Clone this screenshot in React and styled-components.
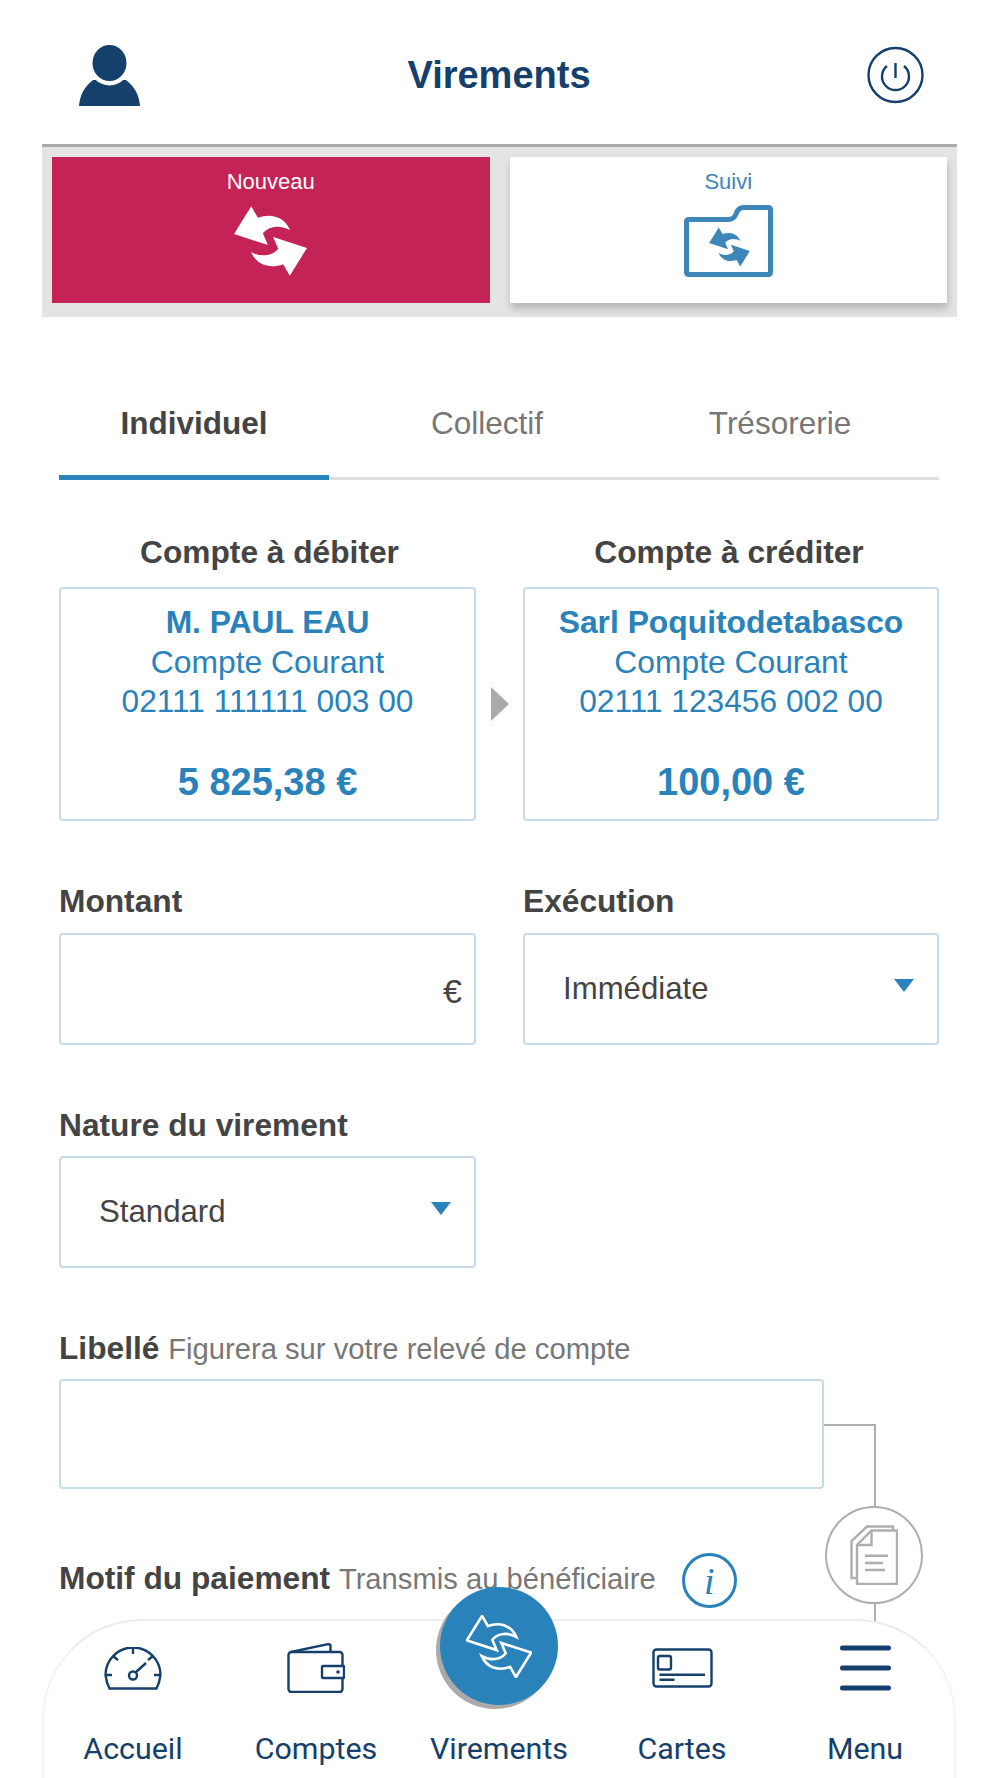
import styled, { createGlobalStyle } from 'styled-components'

const NAVY = '#14406b'
const BLUE = '#2a82ba'
const DARK = '#444444'
const GREY = '#777777'
const FIELD_BORDER = '#c6dce9'
const LINE = '#aeaeae'

function SwapArrowPaths(props) {
  const arrow = 'M155 108 L175 143 C215 128 255 140 272 180 C245 165 210 165 190 190 L205 225 L103 192 Z'
  return (
    <g {...props}>
      <path d={arrow} />
      <path d={arrow} transform="rotate(180 213 213)" />
    </g>
  )
}

function UserIcon() {
  return (
    <UserSvg width="61" height="61" viewBox="0 0 61 61">
      <path d="M0 61 C1 50 5 42 14 35 L47 35 C56 42 60 50 61 61 Z" fill={NAVY} />
      <ellipse cx="30.5" cy="19" rx="20.5" ry="21.5" fill="#fff" />
      <ellipse cx="30.5" cy="18" rx="17" ry="18" fill={NAVY} />
    </UserSvg>
  )
}

function PowerIcon() {
  return (
    <svg width="57" height="58" viewBox="0 0 57 58" fill="none" stroke={NAVY} strokeWidth="2.4">
      <circle cx="28.5" cy="29" r="27" />
      <path d="M20 20 A13.5 13.5 0 1 0 37 20" />
      <path d="M28.5 17 V32" />
    </svg>
  )
}

function FolderIcon() {
  return (
    <svg width="89" height="72" viewBox="0 0 89 72">
      <path
        d="M5 14.5 H44 Q50 14.5 52 9 Q54 2.5 60 2.5 H84 Q86.5 2.5 86.5 5 V67 Q86.5 69.5 84 69.5 H5 Q2.5 69.5 2.5 67 V17 Q2.5 14.5 5 14.5 Z"
        fill="none"
        stroke="#3d86b8"
        strokeWidth="5"
      />
      <svg x="24" y="22" width="43" height="40" viewBox="100 105 226 216">
        <SwapArrowPaths fill="#3d86b8" />
      </svg>
    </svg>
  )
}

function GaugeIcon() {
  return (
    <svg width="58" height="43" viewBox="0 0 58 43" fill="none" stroke={NAVY} strokeWidth="2.4">
      <path d="M5.5 41.5 H52.5 Q55.5 36 56.5 28 A27.5 27.5 0 0 0 1.5 28 Q2.5 36 5.5 41.5 Z" />
      <path d="M29 1 V7 M9 9 L14 13 M49 9 L44 13 M1 28 H8 M50 28 H57 M32 25 L42 16" />
      <circle cx="29" cy="28.5" r="4" />
    </svg>
  )
}

function WalletIcon() {
  return (
    <svg width="58" height="50" viewBox="0 0 58 50" fill="none" stroke={NAVY} strokeWidth="2.4" strokeLinejoin="round">
      <path d="M4 9 L41 1.2 Q43.5 1 43.5 3 V9" />
      <rect x="1.5" y="9" width="54" height="40" rx="3" />
      <rect x="35" y="23" width="22" height="12" rx="1" fill="#fff" />
      <circle cx="51" cy="29" r="1.8" fill={NAVY} stroke="none" />
    </svg>
  )
}

function CardIcon() {
  return (
    <svg width="61" height="40" viewBox="0 0 61 40" fill="none" stroke={NAVY} strokeWidth="2.4">
      <rect x="1.5" y="1.5" width="58" height="37" rx="3" />
      <rect x="6" y="8" width="13" height="13.5" rx="2" />
      <path d="M7.5 26.7 H53 M7.5 31.7 H22.5" />
    </svg>
  )
}

function MenuIcon() {
  return (
    <svg width="51" height="48" viewBox="0 0 51 48" stroke={NAVY} strokeWidth="5" strokeLinecap="round">
      <path d="M2.5 4 H48.5 M2.5 24 H48.5 M2.5 44 H48.5" />
    </svg>
  )
}

function DocsIcon() {
  return (
    <svg width="48" height="60" viewBox="0 0 48 60" fill="none" stroke={LINE} strokeWidth="2.4">
      <path d="M7 53 H1.5 V16 L17 1.5 H43 V5.5" />
      <path d="M21.5 5.5 H47 V59 H7 V20 Z" />
      <path d="M21.5 5.5 V20 H7" />
      <path d="M15 30.7 H38 M15 38 H33 M15 45 H35" />
    </svg>
  )
}

function App() {
  const tabs = ['Individuel', 'Collectif', 'Trésorerie']
  const navItems = [
    { label: 'Accueil', icon: <GaugeIcon /> },
    { label: 'Comptes', icon: <WalletIcon /> },
    { label: 'Virements', icon: null },
    { label: 'Cartes', icon: <CardIcon /> },
    { label: 'Menu', icon: <MenuIcon /> },
  ]

  return (
    <Page>
      <GlobalStyle />
      <Header>
        <UserIcon />
        <Title>Virements</Title>
        <PowerSlot>
          <PowerIcon />
        </PowerSlot>
      </Header>

      <ModeBand>
        <ModeCard $active>
          Nouveau
          <svg width="75" height="72" viewBox="100 105 226 216">
            <SwapArrowPaths fill="#fff" />
          </svg>
        </ModeCard>
        <ModeCard>
          Suivi
          <FolderIcon />
        </ModeCard>
      </ModeBand>

      <Content>
        <TabRow>
          {tabs.map((tab, i) => (
            <Tab key={tab} $active={i === 0}>
              {tab}
            </Tab>
          ))}
        </TabRow>

        <Accounts>
          <AccountTitle $side="left">Compte à débiter</AccountTitle>
          <span />
          <AccountTitle $side="right">Compte à créditer</AccountTitle>
          <AccountBox>
            <AccountName>M. PAUL EAU</AccountName>
            <AccountLine>Compte Courant</AccountLine>
            <AccountNumber>02111 111111 003 00</AccountNumber>
            <AccountAmount>5 825,38 €</AccountAmount>
          </AccountBox>
          <ArrowCell>
            <RightTriangle />
          </ArrowCell>
          <AccountBox>
            <AccountName>Sarl Poquitodetabasco</AccountName>
            <AccountLine>Compte Courant</AccountLine>
            <AccountNumber>02111 123456 002 00</AccountNumber>
            <AccountAmount>100,00 €</AccountAmount>
          </AccountBox>
        </Accounts>

        <FormRow>
          <div>
            <FieldLabel>Montant</FieldLabel>
            <Field>
              <Currency>€</Currency>
            </Field>
          </div>
          <div>
            <FieldLabel>Exécution</FieldLabel>
            <Field>
              <SelectValue>Immédiate</SelectValue>
              <DownTriangle />
            </Field>
          </div>
        </FormRow>

        <FormRow>
          <div>
            <FieldLabel $gap="11px">Nature du virement</FieldLabel>
            <Field>
              <SelectValue>Standard</SelectValue>
              <DownTriangle />
            </Field>
          </div>
        </FormRow>

        <LabelGroup>
          <FieldLabel $gap="10px">
            Libellé <Hint>Figurera sur votre relevé de compte</Hint>
          </FieldLabel>
          <FieldWrap>
            <Field $width="765px" $height="110px" />
            <Attachment>
              <Elbow />
              <AttachCircle>
                <DocsIcon />
              </AttachCircle>
              <Stem />
            </Attachment>
          </FieldWrap>
        </LabelGroup>

        <MotifRow>
          <FieldLabel $gap="0">
            Motif du paiement <Hint>Transmis au bénéficiaire</Hint>
          </FieldLabel>
          <InfoBadge>i</InfoBadge>
        </MotifRow>
      </Content>

      <BottomNav>
        {navItems.map((item) => (
          <NavItem key={item.label}>
            <NavIconSlot>
              {item.icon || (
                <CenterButton>
                  <svg width="66" height="63" viewBox="100 105 226 216">
                    <SwapArrowPaths fill="none" stroke="#fff" strokeWidth="9" strokeLinejoin="miter" />
                  </svg>
                </CenterButton>
              )}
            </NavIconSlot>
            <NavLabel>{item.label}</NavLabel>
          </NavItem>
        ))}
      </BottomNav>
    </Page>
  )
}

export default App

const GlobalStyle = createGlobalStyle`
  html, body {
    margin: 0;
    background: #fff;
  }
  * {
    box-sizing: border-box;
  }
`

const Page = styled.div`
  position: relative;
  width: 1000px;
  height: 1778px;
  overflow: hidden;
  background: #fff;
  font-family: 'Liberation Sans', Arial, sans-serif;
`

const Header = styled.header`
  display: grid;
  grid-template-columns: 1fr auto 1fr;
  align-items: center;
  height: 144px;
  padding: 6px 76px 0 74px;
`

const UserSvg = styled.svg`
  margin-left: 5px;
`

const Title = styled.h1`
  margin: 0;
  font-size: 38px;
  font-weight: 700;
  color: ${NAVY};
`

const PowerSlot = styled.div`
  display: flex;
  justify-content: flex-end;
`

const ModeBand = styled.section`
  display: grid;
  grid-template-columns: 1fr 1fr;
  gap: 20px;
  width: 915px;
  margin-left: 42px;
  padding: 10px 10px 14px;
  background: #e4e4e4;
  border-top: 3px solid #aaaaaa;
`

const ModeCard = styled.div`
  display: flex;
  flex-direction: column;
  align-items: center;
  gap: 11px;
  height: 146px;
  padding-top: 13px;
  font-size: 22px;
  line-height: 24px;
  color: ${(p) => (p.$active ? '#fff' : '#3d86b8')};
  background: ${(p) => (p.$active ? '#c32355' : '#fff')};
  box-shadow: ${(p) => (p.$active ? 'none' : '1px 6px 8px rgba(0, 0, 0, 0.2)')};
`

const Content = styled.main`
  padding: 0 61px 0 59px;
`

const TabRow = styled.nav`
  display: grid;
  grid-template-columns: repeat(3, 270px);
  gap: 23px;
  height: 83px;
  margin-top: 80px;
  border-bottom: 3px solid #dddddd;
`

const Tab = styled.div`
  height: 83px;
  line-height: 53px;
  text-align: center;
  font-size: 31.5px;
  font-weight: ${(p) => (p.$active ? 700 : 400)};
  color: ${(p) => (p.$active ? DARK : GREY)};
  border-bottom: ${(p) => (p.$active ? `5px solid ${BLUE}` : 'none')};
`

const Accounts = styled.section`
  display: grid;
  grid-template-columns: 417px 47px 416px;
  margin-top: 52px;
`

const AccountTitle = styled.h2`
  margin: 0 0 15px;
  padding-${(p) => p.$side}: 4px;
  font-size: 31.7px;
  line-height: 40px;
  font-weight: 700;
  text-align: center;
  color: ${DARK};
`

const AccountBox = styled.div`
  display: flex;
  flex-direction: column;
  height: 234px;
  padding: 14px 0 15px;
  text-align: center;
  color: ${BLUE};
  border: 2px solid ${FIELD_BORDER};
  border-radius: 4px;
`

const AccountName = styled.div`
  font-size: 31.8px;
  line-height: 39px;
  font-weight: 700;
`

const AccountLine = styled.div`
  font-size: 31.8px;
  line-height: 40px;
`

const AccountNumber = styled.div`
  font-size: 31.7px;
  line-height: 39px;
`

const AccountAmount = styled.div`
  margin-top: auto;
  font-size: 38px;
  line-height: 44px;
  font-weight: 700;
`

const ArrowCell = styled.div`
  display: flex;
  align-items: center;
  justify-content: center;
`

const RightTriangle = styled.div`
  width: 0;
  height: 0;
  border-style: solid;
  border-width: 17px 0 17px 18px;
  border-color: transparent transparent transparent #aaaaaa;
`

const FormRow = styled.section`
  display: grid;
  grid-template-columns: 417px 416px;
  gap: 47px;
  margin-top: 60px;
`

const LabelGroup = styled.section`
  margin-top: 60px;
`

const FieldLabel = styled.div`
  margin-bottom: ${(p) => p.$gap || '12px'};
  font-size: 31.7px;
  line-height: 40px;
  font-weight: 700;
  color: ${DARK};
`

const Hint = styled.span`
  font-size: 29.2px;
  font-weight: 400;
  color: ${GREY};
`

const Field = styled.div`
  display: flex;
  align-items: center;
  justify-content: space-between;
  width: ${(p) => p.$width || '100%'};
  height: ${(p) => p.$height || '112px'};
  padding: 0 23px 0 38px;
  background: #fff;
  border: 2px solid ${FIELD_BORDER};
  border-radius: 4px;
`

const Currency = styled.span`
  margin: 4px -11px 0 auto;
  font-size: 34px;
  color: ${DARK};
`

const SelectValue = styled.span`
  font-size: 31.2px;
  color: ${DARK};
`

const DownTriangle = styled.span`
  width: 0;
  height: 0;
  margin-top: -8px;
  border-style: solid;
  border-width: 13px 10px 0 10px;
  border-color: ${BLUE} transparent transparent transparent;
`

const FieldWrap = styled.div`
  position: relative;
`

const Attachment = styled.div`
  position: absolute;
  left: 765px;
  top: 45px;
  width: 99px;
`

const Elbow = styled.div`
  width: 52px;
  height: 82px;
  border-top: 2.5px solid ${LINE};
  border-right: 2.5px solid ${LINE};
`

const AttachCircle = styled.div`
  display: flex;
  align-items: center;
  justify-content: center;
  width: 98px;
  height: 98px;
  margin-left: 1px;
  background: #fff;
  border: 2.5px solid ${LINE};
  border-radius: 50%;
`

const Stem = styled.div`
  width: 2.5px;
  height: 18px;
  margin-left: 49.5px;
  background: ${LINE};
`

const MotifRow = styled.section`
  display: flex;
  align-items: center;
  margin-top: 60px;
`

const InfoBadge = styled.div`
  display: flex;
  align-items: center;
  justify-content: center;
  width: 55px;
  height: 55px;
  margin: 4px 0 0 26px;
  font-family: 'Liberation Serif', 'Times New Roman', serif;
  font-style: italic;
  font-size: 38px;
  color: ${BLUE};
  border: 3px solid ${BLUE};
  border-radius: 50%;
`

const BottomNav = styled.nav`
  position: absolute;
  left: 42px;
  top: 1619px;
  display: grid;
  grid-template-columns: repeat(5, 183px);
  justify-content: center;
  width: 914px;
  height: 159px;
  background: #fff;
  border: 2px solid #f4f4f4;
  border-top-color: #ececec;
  border-bottom: none;
  border-radius: 100px 100px 0 0;
`

const NavItem = styled.div`
  display: flex;
  flex-direction: column;
  align-items: center;
`

const NavIconSlot = styled.div`
  position: relative;
  display: flex;
  align-items: center;
  justify-content: center;
  width: 100%;
  height: 94px;
`

const CenterButton = styled.div`
  position: absolute;
  left: 50%;
  top: -34px;
  display: flex;
  align-items: center;
  justify-content: center;
  width: 118px;
  height: 118px;
  transform: translateX(-50%);
  background: ${BLUE};
  border-radius: 50%;
  box-shadow: -4px 4px 0 #aaaaaa;
`

const NavLabel = styled.div`
  margin-top: 16px;
  font-family: Roboto, 'Liberation Sans', sans-serif;
  font-size: 30.4px;
  line-height: 36px;
  color: ${NAVY};
`
